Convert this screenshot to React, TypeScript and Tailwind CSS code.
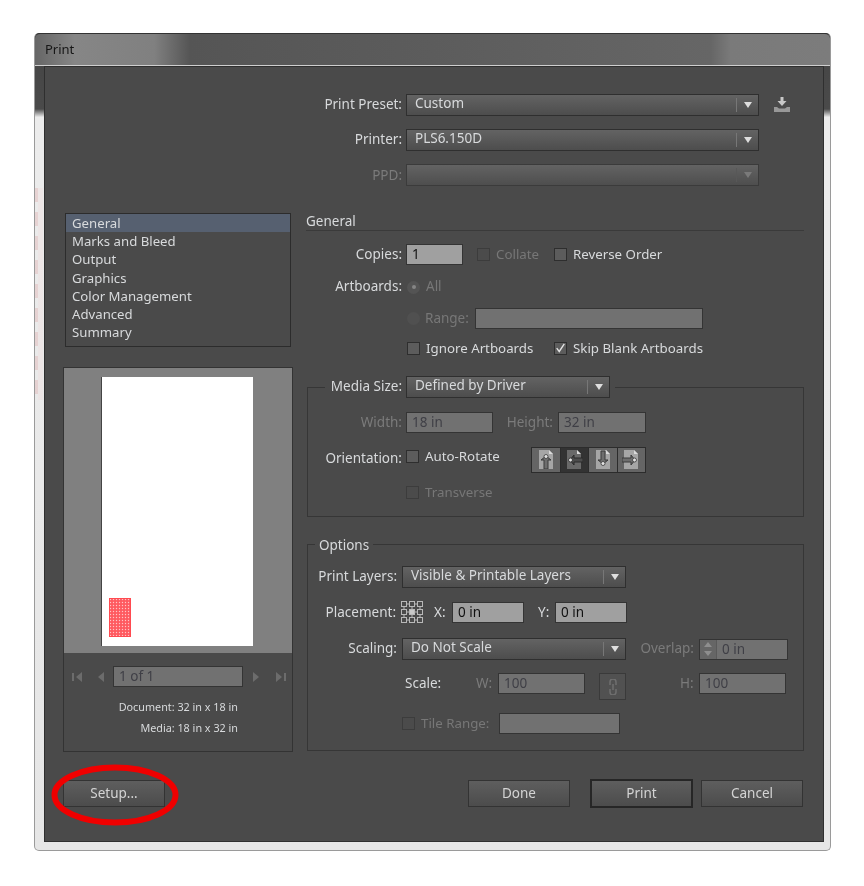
import React from "react";

const font = "font-['Noto_Sans',sans-serif]";

function Lbl({ w, off, children }: { w: string; off?: boolean; children: React.ReactNode }) {
  return <span className={`${w} shrink-0 text-right text-[13.5px] leading-none whitespace-nowrap ${off ? "text-[#7b7b7b]" : "text-[#d8dadc]"}`}>{children}</span>;
}

function Select({ w, value, off }: { w: string; value?: string; off?: boolean }) {
  return (
    <div className={`${w} h-[22px] flex items-center shrink-0 border border-[#2f2f2f] bg-gradient-to-b from-[#636363] to-[#4d4d4d] ${off ? "border-[#3b3b3b] from-[#565656] to-[#4e4e4e]" : ""}`}>
      <span className="flex-1 pl-[8px] pb-[2px] text-[13.5px] leading-none text-[#d8dadc] whitespace-nowrap">{value}</span>
      <div className={`w-[1px] h-[14px] ${off ? "bg-[#585858]" : "bg-[#777777]"}`} />
      <div className="w-[21px] flex justify-center">
        <svg width="8" height="6" viewBox="0 0 8 6"><path d="M0 0h8L4 6z" fill={off ? "#7a7a7a" : "#dedede"} /></svg>
      </div>
    </div>
  );
}

function Field({ w, value, off }: { w: string; value?: string; off?: boolean }) {
  return (
    <div className={`${w} h-[21px] shrink-0 flex items-center pl-[5px] border border-[#343434] text-[13.5px] leading-none ${off ? "bg-[#717171] text-[#3f3f46]" : "bg-[#a0a0a0] text-[#111111]"}`}>
      {value}
    </div>
  );
}

function Check({ label, off, checked }: { label: string; off?: boolean; checked?: boolean }) {
  return (
    <div className="flex items-center gap-[6px] shrink-0">
      <div className={`w-[13px] h-[13px] border flex items-center justify-center ${off ? "border-[#3c3c3c] bg-[#4b4b4b]" : "border-[#2e2e2e] bg-[#5c5c5c]"}`}>
        {checked && <svg width="13" height="13" viewBox="0 0 13 13"><path d="M2 6l3 4 6-9" fill="none" stroke="#e4e4e4" strokeWidth="1.600" /></svg>}
      </div>
      <span className={`text-[13.3px] leading-none whitespace-nowrap ${off ? "text-[#777777]" : "text-[#d8dadc]"}`}>{label}</span>
    </div>
  );
}

function Btn({ w, label, main }: { w: string; label: string; main?: boolean }) {
  return (
    <div className={`${w} flex items-center justify-center pb-[1px] shrink-0 text-[13.5px] text-[#d4d4d4] bg-gradient-to-b from-[#5e5e5e] to-[#4c4c4c] ${main ? "h-[29px] border-2 border-[#262626]" : "h-[27px] border border-[#333333]"}`}>
      {label}
    </div>
  );
}

function OrientIcon({ rot, active }: { rot: number; active?: boolean }) {
  const page = active ? "#696969" : "#a6a6a6";
  const arrow = active ? "#2a2a2a" : "#3a3a3a";
  const body = active ? "#4c4c4c" : "#6e6e6e";
  return (
    <div className={`w-[27.5px] h-[24px] flex items-center justify-center ${active ? "bg-[#333333]" : "bg-[#656565]"}`}>
      <svg width="18" height="19" viewBox="0 0 18 19">
        <path d="M2 0h10l4 4v15H2z" fill={page} />
        <path d="M12 0v4h4z" fill="#dadada" />
        <g transform={`rotate(${rot} 9 10)`}>
          <path d="M9 6l5 4h-3v9H7v-9H4z" fill={body} stroke={arrow} strokeWidth="1" />
          <circle cx="9" cy="6.500" r="2" fill="#e2e2e2" stroke={arrow} strokeWidth="0.800" />
        </g>
      </svg>
    </div>
  );
}

function Nav({ flip, bar }: { flip?: boolean; bar?: boolean }) {
  return (
    <svg width="11" height="10" viewBox="0 0 11 10" className={flip ? "rotate-180" : ""}>
      {bar && <rect x="0" y="1" width="2" height="8" fill="#6c6c6c" />}
      <path d="M10 0v10L4 5z" fill="#6c6c6c" />
    </svg>
  );
}

export default function App() {
  const items = ["General", "Marks and Bleed", "Output", "Graphics", "Color Management", "Advanced", "Summary"];
  const cells = [0, 8, 16];
  return (
    <div className={`relative w-[864px] h-[886px] bg-white pt-[33px] pl-[34px] overflow-hidden ${font}`}>
      <div className="w-[797px] h-[818px] flex flex-col rounded-[5px] border-x border-b border-[#9a9a9a] blur-[0.35px] bg-[linear-gradient(180deg,#444444_0%,#4a4a4a_9.300%,#ececec_10.300%,#e6e6e6_100%)]">
        <div className="h-[33px] shrink-0 flex items-center pl-[10px] rounded-t-[5px] border-t border-[#333333] text-[13px] text-[#161616] bg-[linear-gradient(90deg,#666666_0%,#868686_5%,#808080_15%,#555555_19.500%,#5c5c5c_50%,#666666_85%,#7a7a7a_87.500%,#7c7c7c_100%)] shadow-[inset_0_-1px_0_#cfcfcf]">
          Print
        </div>
        <div className="flex-1 ml-[9px] mr-[6px] mb-[8px] flex flex-col border border-[#2f2f2f] bg-[#4a4a4a]">
          <div className="pt-[27px] flex flex-col gap-[13px]">
            <div className="flex items-center gap-[4px]">
              <Lbl w="w-[357px]">Print Preset:</Lbl>
              <Select w="w-[353px]" value="Custom" />
              <svg width="18" height="16" viewBox="0 0 18 16" className="ml-[10px]">
                <path d="M7.500 0h3v4h3l-4.500 5-4.500-5h3z" fill="#c8c8c8" />
                <path d="M1 10h3l2 1.500h6l2-1.500h3v5H1z" fill="#989898" />
              </svg>
            </div>
            <div className="flex items-center gap-[4px]">
              <Lbl w="w-[357px]">Printer:</Lbl>
              <Select w="w-[353px]" value="PLS6.150D" />
            </div>
            <div className="flex items-center gap-[4px]">
              <span className="w-[357px] pt-[2px]"><Lbl w="block w-[357px]" off>PPD:</Lbl></span>
              <Select w="w-[353px]" off />
            </div>
          </div>

          <div className="mt-[27px] ml-[18px] flex">
            <div className="w-[230px] shrink-0 flex flex-col">
              <div className="mx-[2px] h-[134px] border border-[#2c2c2c] text-[13.2px] text-[#d8dadc]">
                {items.map((it, i) => (
                  <div key={it} className={`h-[18.200px] leading-[18px] pl-[6px] ${i === 0 ? "bg-[#566070]" : ""}`}>{it}</div>
                ))}
              </div>
              <div className="mt-[20px] h-[385px] border border-[#333333] flex flex-col">
                <div className="h-[285px] bg-[#808080] pt-[9px] pl-[37px]">
                  <div className="w-[152px] h-[269px] bg-white border-l border-[#444444] flex flex-col justify-end pb-[9px] pl-[7px]">
                    <svg width="22" height="39" viewBox="0 0 22 39">
                      <defs>
                        <pattern id="dots" width="3" height="3" patternUnits="userSpaceOnUse">
                          <rect width="3" height="3" fill="#ff5a60" />
                          <circle cx="1.500" cy="1.500" r="0.700" fill="#ffc4c6" />
                        </pattern>
                      </defs>
                      <rect width="22" height="39" fill="url(#dots)" />
                      <rect x="0.500" y="0.500" width="21" height="38" fill="none" stroke="#ff4a50" />
                    </svg>
                  </div>
                </div>
                <div className="flex items-center h-[21px] mt-[13px] pl-[8px]">
                  <Nav bar />
                  <div className="ml-[11px]"><Nav /></div>
                  <div className="ml-[8px] w-[130px] h-[21px] flex items-center pl-[5px] border border-[#343434] bg-[#717171] text-[13.5px] text-[#3f3f46]">1 of 1</div>
                  <div className="ml-[9px]"><Nav flip /></div>
                  <div className="ml-[12px]"><Nav flip bar /></div>
                </div>
                <div className="mt-[14px] pr-[54px] flex flex-col gap-[9px] items-end text-[10.8px] leading-[12px] text-[#d8dadc]">
                  <span>Document: 32 in x 18 in</span>
                  <span>Media: 18 in x 32 in</span>
                </div>
              </div>
            </div>

            <div className="ml-[13px] w-[498px] flex flex-col">
              <div className="h-[18px] pt-[1px] border-b border-[#3a3a3a] text-[13.5px] leading-[14px] text-[#d8dadc]">General</div>
              <div className="mt-[13px] flex items-center gap-[4px]">
                <Lbl w="w-[96px]">Copies:</Lbl>
                <Field w="w-[57px]" value="1" />
                <div className="ml-[10px] w-[73px]"><Check label="Collate" off /></div>
                <Check label="Reverse Order" />
              </div>
              <div className="mt-[12px] h-[20px] flex items-center gap-[4px]">
                <Lbl w="w-[96px]">Artboards:</Lbl>
                <div className="ml-[1px] w-[13px] h-[13px] rounded-full bg-[#545454] flex items-center justify-center">
                  <div className="w-[4px] h-[4px] rounded-full bg-[#858585]" />
                </div>
                <span className="ml-[2px] text-[13.5px] leading-none text-[#777777]">All</span>
              </div>
              <div className="mt-[11px] flex items-center">
                <div className="ml-[101px] w-[13px] h-[13px] rounded-full bg-[#505050]" />
                <span className="ml-[5px] w-[50px] text-[13.5px] leading-none text-[#777777]">Range:</span>
                <Field w="w-[228px]" off />
              </div>
              <div className="mt-[10px] ml-[101px] h-[20px] flex items-center">
                <div className="w-[147px]"><Check label="Ignore Artboards" /></div>
                <Check label="Skip Blank Artboards" checked />
              </div>

              <fieldset className="mt-[17px] ml-[1px] w-[497px] h-[141px] border border-[#363636]">
                <legend className="ml-[17px] px-[5px] flex items-center gap-[4px] h-[22px]">
                  <span className="w-[72px] text-right text-[13.5px] leading-none text-[#d8dadc] whitespace-nowrap">Media Size:</span>
                  <Select w="w-[204px]" value="Defined by Driver" />
                </legend>
                <div className="pt-[14px] flex items-center">
                  <Lbl w="w-[94px]" off>Width:</Lbl>
                  <div className="ml-[4px]"><Field w="w-[87px]" value="18 in" off /></div>
                  <Lbl w="w-[60px]" off>Height:</Lbl>
                  <div className="ml-[5px]"><Field w="w-[88px]" value="32 in" off /></div>
                </div>
                <div className="mt-[14px] flex items-center h-[25px]">
                  <span className="pb-[2px]"><Lbl w="block w-[94px]">Orientation:</Lbl></span>
                  <div className="ml-[4px] w-[125px] pb-[5px]"><Check label="Auto-Rotate" /></div>
                  <div className="flex gap-[1px] border border-[#2c2c2c] bg-[#2c2c2c]">
                    <OrientIcon rot={0} />
                    <OrientIcon rot={-90} active />
                    <OrientIcon rot={180} />
                    <OrientIcon rot={90} />
                  </div>
                </div>
                <div className="mt-[14px] ml-[98px]"><Check label="Transverse" off /></div>
              </fieldset>

              <fieldset className="mt-[19px] ml-[1px] w-[497px] h-[215px] border border-[#363636]">
                <legend className="ml-[7px] px-[4px] h-[17px] pt-[1px] text-[13.5px] leading-[16px] text-[#d8dadc]">Options</legend>
                <div className="mt-[13px] flex items-center gap-[5px]">
                  <Lbl w="w-[89px]">Print Layers:</Lbl>
                  <Select w="w-[224px]" value="Visible & Printable Layers" />
                </div>
                <div className="mt-[13px] flex items-center">
                  <Lbl w="w-[88px]">Placement:</Lbl>
                  <svg width="23" height="23" viewBox="0 0 23 23" className="ml-[5px]" fill="none" stroke="#b8b8b8">
                    {cells.map((y) => cells.map((x) => (
                      <rect key={`${x}-${y}`} x={x + 0.5} y={y + 0.5} width="5" height="5" fill={x === 8 && y === 8 ? "#c8c8c8" : "none"} />
                    )))}
                    <path d="M5.500 3h3M13.500 3h3M5.500 11h3M13.500 11h3M5.500 19h3M13.500 19h3M3 5.500v3M3 13.500v3M11 5.500v3M11 13.500v3M19 5.500v3M19 13.500v3" />
                  </svg>
                  <span className="ml-[10px] w-[18px] text-[13.5px] leading-none text-[#d8dadc]">X:</span>
                  <Field w="w-[72px]" value="0 in" />
                  <span className="ml-[14px] w-[17px] text-[13.5px] leading-none text-[#d8dadc]">Y:</span>
                  <Field w="w-[72px]" value="0 in" />
                </div>
                <div className="mt-[14px] flex items-center">
                  <Lbl w="w-[89px]">Scaling:</Lbl>
                  <div className="ml-[5px]"><Select w="w-[224px]" value="Do Not Scale" /></div>
                  <Lbl w="w-[68px]" off>Overlap:</Lbl>
                  <div className="ml-[5px] w-[89px] h-[21px] flex border border-[#343434] bg-[#717171]">
                    <div className="w-[17px] border-r border-[#5a5a5a] flex flex-col items-center justify-around bg-[#666666]">
                      <svg width="8" height="5" viewBox="0 0 8 5"><path d="M0 5h8L4 0z" fill="#8e8e8e" /></svg>
                      <svg width="8" height="5" viewBox="0 0 8 5"><path d="M0 0h8L4 5z" fill="#8e8e8e" /></svg>
                    </div>
                    <span className="pl-[5px] text-[13.5px] leading-[18px] text-[#3f3f46]">0 in</span>
                  </div>
                </div>
                <div className="mt-[13px] h-[27px] flex items-start">
                  <span className="ml-[97px] w-[71px] text-[13.5px] leading-[20px] text-[#d8dadc]">Scale:</span>
                  <span className="w-[22px] text-[13.5px] leading-[20px] text-[#7b7b7b]">W:</span>
                  <Field w="w-[87px]" value="100" off />
                  <div className="ml-[14px] w-[27px] h-[27px] border border-[#3a3a3a] bg-[#515151] flex items-center justify-center">
                    <svg width="10" height="16" viewBox="0 0 10 16" fill="none" stroke="#6f6f6f" strokeWidth="1.500">
                      <path d="M2 6V3a3 3 0 0 1 6 0v3M2 10v3a3 3 0 0 0 6 0v-3M5 5v6" />
                    </svg>
                  </div>
                  <span className="ml-[54px] w-[19px] text-[13.5px] leading-[20px] text-[#7b7b7b]">H:</span>
                  <Field w="w-[87px]" value="100" off />
                </div>
                <div className="mt-[13px] ml-[94px] flex items-center">
                  <div className="w-[97px]"><Check label="Tile Range:" off /></div>
                  <Field w="w-[121px]" off />
                </div>
              </fieldset>
            </div>
          </div>

          <div className="mt-[27px] ml-[18px] flex items-center">
            <Btn w="w-[102px]" label="Setup..." />
            <div className="ml-[303px]"><Btn w="w-[102px]" label="Done" /></div>
            <div className="ml-[20px]"><Btn w="w-[103px]" label="Print" main /></div>
            <div className="ml-[8px]"><Btn w="w-[102px]" label="Cancel" /></div>
          </div>
        </div>
      </div>
      <div className="absolute left-[35px] top-[188px] w-[3px] h-[212px] opacity-25 bg-[repeating-linear-gradient(180deg,#d98a8a_0px,#d98a8a_14px,transparent_14px,transparent_24px)]" />
      <div className="absolute left-[38px] top-[188px] w-[5px] h-[212px] opacity-35 bg-[#f2dcdc]" />
      <svg width="130" height="64" viewBox="0 0 130 64" className="absolute left-[50px] top-[763px]">
        <ellipse cx="65" cy="32" rx="60.500" ry="27.500" fill="none" stroke="#f00000" strokeWidth="6" />
      </svg>
    </div>
  );
}
